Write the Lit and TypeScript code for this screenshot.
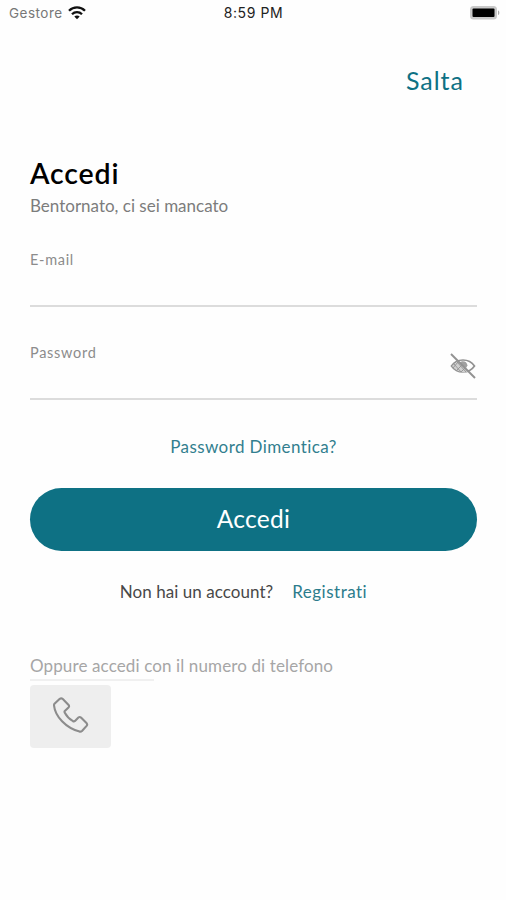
import { LitElement, html, css } from "lit";
import { customElement } from "lit/decorators.js";

@customElement("status-bar")
class StatusBar extends LitElement {
  static styles = css`
    :host {
      display: grid;
      grid-template-columns: 1fr auto 1fr;
      align-items: center;
      height: 26px;
      padding: 0 6px 0 9px;
      font: 13px/26px Inter, sans-serif;
      color: #222;
    }
    .carrier { display: flex; align-items: center; gap: 5px; color: #777; font-size: 13.500px; letter-spacing: 0.5px; }
    .time { font-size: 14px; letter-spacing: 0.6px; margin-right: 2px; }
    .battery { justify-self: end; }
    svg { display: block; }
  `;
  render() {
    return html`
      <div class="carrier">
        <span>Gestore</span>
        <svg width="18" height="14" viewBox="0 0 18 14" fill="none" stroke="#111" stroke-width="2.3">
          <path d="M1 4.8C5.5.3 12.500.3 17 4.800M4 8.200C6.800 5.400 11.200 5.400 14 8.200" />
          <path d="M9 13.200L6.300 10.500C7.700 9.100 10.300 9.100 11.700 10.500Z" fill="#111" stroke="none" />
        </svg>
      </div>
      <span class="time">8:59 PM</span>
      <svg class="battery" width="31" height="16" viewBox="0 0 31 16">
        <rect x="1" y="1" width="27" height="13.500" rx="3.500" fill="#c9c9c9" />
        <path d="M29 5.500C30.800 6 30.800 9.500 29 10Z" fill="#aaa" />
        <rect x="3.500" y="3.500" width="22" height="8.500" rx="1" fill="#000" />
      </svg>
    `;
  }
}

@customElement("app-root")
class AppRoot extends LitElement {
  static styles = css`
    :host {
      display: block;
      height: 900px;
      background: #fefefe;
      font-family: Lato, sans-serif;
      font-variant-ligatures: none;
      color: #000;
    }
    main { display: flex; flex-direction: column; padding: 39px 29px 0 30px; }
    .skip { align-self: flex-end; margin-right: 13px; font-size: 25px; line-height: 30px; letter-spacing: 1px; color: #0e7184; }
    h1 { margin: 61px 0 5px; font-size: 28.500px; line-height: 34px; font-weight: 600; letter-spacing: 0.85px; }
    .subtitle { font-size: 17px; line-height: 22px; color: #7c7c7c; letter-spacing: 0; margin-bottom: 34px; }
    .field { display: flex; justify-content: space-between; box-sizing: border-box; height: 56px; border-bottom: 2px solid #dcdcdc; margin-bottom: 37px; }
    .label { font-size: 14.500px; line-height: 18px; color: #8c8c8c; letter-spacing: 0.7px; }
    .eye { margin: 8px 0 0; }
    .forgot { align-self: center; margin-top: -1px; font-size: 17px; line-height: 22px; color: #327f8f; letter-spacing: 0.4px; }
    .submit { height: 63px; margin: 30px 0 30px; border: 0; border-radius: 32px; background: #0e7184; color: #fff; font: 24.500px/60px Lato, sans-serif; letter-spacing: 0.3px; padding: 0 0 2px; }
    .signup { display: flex; justify-content: center; gap: 19px; padding-right: 20px; font-size: 17px; line-height: 22px; }
    .question { color: #484848; letter-spacing: 0.05px; }
    .register { color: #2c7c8c; letter-spacing: 0.5px; }
    .other { margin-top: 52px; font-size: 17px; line-height: 22px; color: #a6a6a6; letter-spacing: 0.12px; }
    .rule { width: 124px; height: 2px; margin: 2px 0 4px; background: #f0f0f0; }
    .phone { display: grid; place-items: center; width: 81px; height: 63px; padding: 0 0 3px; border: 0; border-radius: 4px; background: #eee; }
    svg { display: block; }
  `;
  render() {
    return html`
      <status-bar></status-bar>
      <main>
        <span class="skip">Salta</span>
        <h1>Accedi</h1>
        <span class="subtitle">Bentornato, ci sei mancato</span>
        <div class="field"><span class="label">E-mail</span></div>
        <div class="field">
          <span class="label">Password</span>
          <svg class="eye" width="28" height="28" viewBox="0 0 28 28" fill="none" stroke="#929292" stroke-width="1.700">
            <path d="M2.500 14C8 6 20 6 25.500 14C20 22 8 22 2.500 14Z" />
            <path d="M10 11C13 8 18 9 18.500 13.500L17 16Z" fill="#a0a0a0" stroke="none" />
            <path d="M3 14L9 9L19 20Q10 22 3 14Z" fill="#d0d0d0" stroke="none" />
            <path d="M5 12L12 20M8 10L17 20M4 16L9 10M8 18L13 13M12 20L16 16" stroke-width=".900" />
            <path d="M2 2L26 26" stroke-width="2" />
          </svg>
        </div>
        <span class="forgot">Password Dimentica?</span>
        <button class="submit">Accedi</button>
        <div class="signup">
          <span class="question">Non hai un account?</span>
          <span class="register">Registrati</span>
        </div>
        <span class="other">Oppure accedi con il numero di telefono</span>
        <div class="rule"></div>
        <button class="phone" aria-label="Telefono">
          <svg width="36" height="36" viewBox="0 0 36 36" fill="none" stroke="#8c8c8c" stroke-width="2.100" stroke-linejoin="round">
            <path d="M1.500 6.800L6.800 1.800Q8.300.700 9.800 2L15.600 8Q16.600 9.200 15.500 10.400L11.800 14Q11.200 14.700 11.800 15.800C13.800 19.500 16.500 22.300 20 24.200Q21.100 24.700 22 23.900L25.400 20.500Q26.700 19.500 28 20.600L33.700 26.300Q34.700 27.500 33.600 28.900L29 34Q28 34.900 26.500 34.600C13 31 2 19.500 1 8.300Q.9 7.500 1.500 6.800Z" />
          </svg>
        </button>
      </main>
    `;
  }
}
